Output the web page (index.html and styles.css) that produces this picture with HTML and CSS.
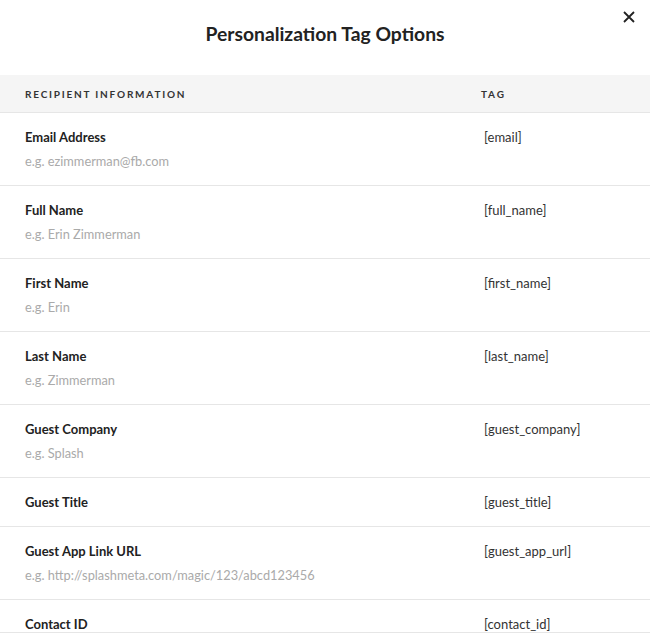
FILE: index.html
```html
<!DOCTYPE html>
<html lang="en">
<head>
    <meta charset="UTF-8">
    <title>Personalization Tag Options</title>
    <link rel="stylesheet" href="styles.css">
</head>
<body>
    <div class="modal">
        <div class="modal-header">
            <h2>Personalization Tag Options</h2>
            <button class="close-btn" aria-label="Close">
                <svg width="12" height="12" viewBox="0 0 12 12">
                    <path d="M1 1 L11 11 M11 1 L1 11" stroke="#222" stroke-width="1.8" fill="none"/>
                </svg>
            </button>
        </div>

        <div class="tag-table">
            <div class="table-head">
                <div>Recipient Information</div>
                <div>Tag</div>
            </div>

            <div class="tag-row">
                <div>
                    <div class="field-name">Email Address</div>
                    <div class="field-example">e.g. ezimmerman@fb.com</div>
                </div>
                <div class="field-tag">[email]</div>
            </div>

            <div class="tag-row">
                <div>
                    <div class="field-name">Full Name</div>
                    <div class="field-example">e.g. Erin Zimmerman</div>
                </div>
                <div class="field-tag">[full_name]</div>
            </div>

            <div class="tag-row">
                <div>
                    <div class="field-name">First Name</div>
                    <div class="field-example">e.g. Erin</div>
                </div>
                <div class="field-tag">[first_name]</div>
            </div>

            <div class="tag-row">
                <div>
                    <div class="field-name">Last Name</div>
                    <div class="field-example">e.g. Zimmerman</div>
                </div>
                <div class="field-tag">[last_name]</div>
            </div>

            <div class="tag-row">
                <div>
                    <div class="field-name">Guest Company</div>
                    <div class="field-example">e.g. Splash</div>
                </div>
                <div class="field-tag">[guest_company]</div>
            </div>

            <div class="tag-row">
                <div>
                    <div class="field-name">Guest Title</div>
                </div>
                <div class="field-tag">[guest_title]</div>
            </div>

            <div class="tag-row">
                <div>
                    <div class="field-name">Guest App Link URL</div>
                    <div class="field-example">e.g. http://splashmeta.com/magic/123/abcd123456</div>
                </div>
                <div class="field-tag">[guest_app_url]</div>
            </div>

            <div class="tag-row">
                <div>
                    <div class="field-name">Contact ID</div>
                </div>
                <div class="field-tag">[contact_id]</div>
            </div>
        </div>
    </div>
</body>
</html>
```

FILE: styles.css
```css
* {
    margin: 0;
    padding: 0;
    box-sizing: border-box;
}

body {
    font-family: Lato, 'Open Sans', sans-serif;
    background: #fff;
    color: #222;
}

.modal {
    width: 650px;
    height: 640px;
    background: #fff;
}

.modal-header {
    position: relative;
    height: 75px;
    display: flex;
    align-items: center;
    justify-content: center;
    padding-bottom: 9px;
}

.modal-header h2 {
    font-size: 19.3px;
    font-weight: 700;
    color: #222;
}

.close-btn {
    position: absolute;
    top: 11px;
    right: 15px;
    width: 12px;
    height: 12px;
    background: none;
    border: none;
    cursor: pointer;
    display: flex;
}

.tag-table {
    height: 558px;
    overflow: hidden;
    border-bottom: 1px solid #e6e6e6;
}

.table-head,
.tag-row {
    display: grid;
    grid-template-columns: 456px 1fr;
    padding-left: 25px;
}

.table-head {
    height: 38px;
    align-items: center;
    background: #f5f5f5;
    border-bottom: 1px solid #e6e6e6;
    font-size: 10px;
    font-weight: 700;
    letter-spacing: 1.8px;
    text-transform: uppercase;
    color: #333;
}

.tag-row {
    padding-top: 15px;
    padding-bottom: 15px;
    border-bottom: 1px solid #e6e6e6;
}

.field-name {
    font-size: 13px;
    font-weight: 700;
    line-height: 18px;
    color: #222;
}

.field-example {
    margin-top: 6px;
    font-size: 12.8px;
    line-height: 18px;
    color: #aaa;
}

.field-tag {
    font-size: 13px;
    line-height: 18px;
    color: #333;
    padding-left: 3px;
}
```
